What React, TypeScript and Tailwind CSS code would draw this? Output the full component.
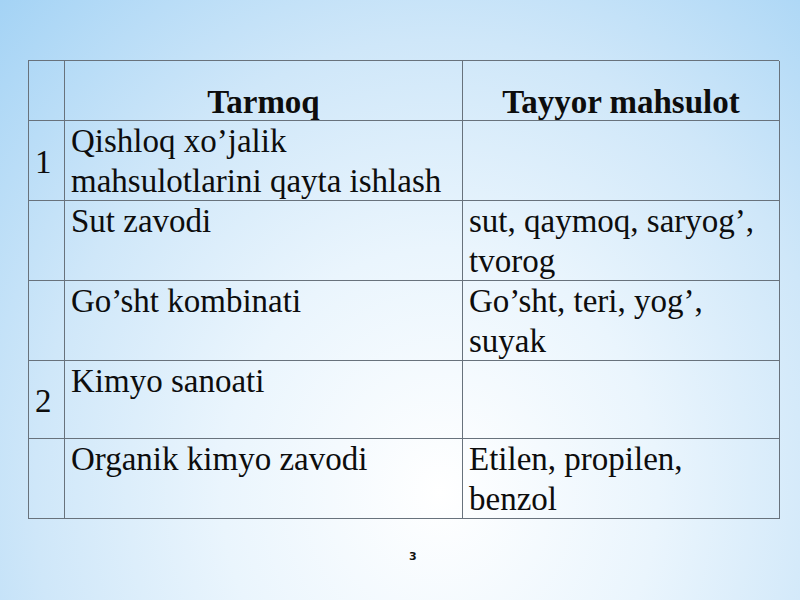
import React from 'react';

interface Row {
  num: string;
  branch: string;
  product: string;
}

const rows: Row[] = [
  { num: '1', branch: 'Qishloq xo’jalik mahsulotlarini qayta ishlash', product: '' },
  { num: '', branch: 'Sut zavodi', product: 'sut, qaymoq, saryog’, tvorog' },
  { num: '', branch: 'Go’sht kombinati', product: 'Go’sht, teri, yog’, suyak' },
  { num: '2', branch: 'Kimyo sanoati', product: '' },
  { num: '', branch: 'Organik kimyo zavodi', product: 'Etilen, propilen, benzol' },
];

const cell = 'border-r border-b border-[#68727c]';

const App: React.FC = () => {
  return (
    <div className="w-[800px] h-[600px] overflow-hidden bg-[radial-gradient(ellipse_at_55%_82%,#ffffff_0%,#eaf5fd_35%,#cfe7f9_65%,#a4d3f5_100%)] text-[#0d0d0d]">
      <div className="pt-[60px] pl-[28px]">
        {/* slide table */}
        <div className="grid grid-cols-[36px_398px_317px] grid-rows-[60px_80px_80px_80px_78px_80px] w-[751px] border-l border-t border-[#68727c] [font-family:'Liberation_Serif','Times_New_Roman',serif] text-[33px] leading-[40px]">
          <div className={cell} />
          <div className={`${cell} flex items-end justify-center font-bold leading-[36px]`}>Tarmoq</div>
          <div className={`${cell} flex items-end justify-center font-bold leading-[36px]`}>Tayyor mahsulot</div>
          {rows.map((r, i) => (
            <React.Fragment key={i}>
              <div className={`${cell} flex items-center pl-[6px] pt-[3px]`}>{r.num}</div>
              <div className={`${cell} pl-[6px]`}>{r.branch}</div>
              <div className={`${cell} pl-[6px] pr-[4px]`}>{r.product}</div>
            </React.Fragment>
          ))}
        </div>
      </div>
      <div className="mt-[32px] pl-[409px] [font-family:'DejaVu_Sans',sans-serif] text-[11px] font-bold leading-none text-[#111]">
        3
      </div>
    </div>
  );
};

export default App;
